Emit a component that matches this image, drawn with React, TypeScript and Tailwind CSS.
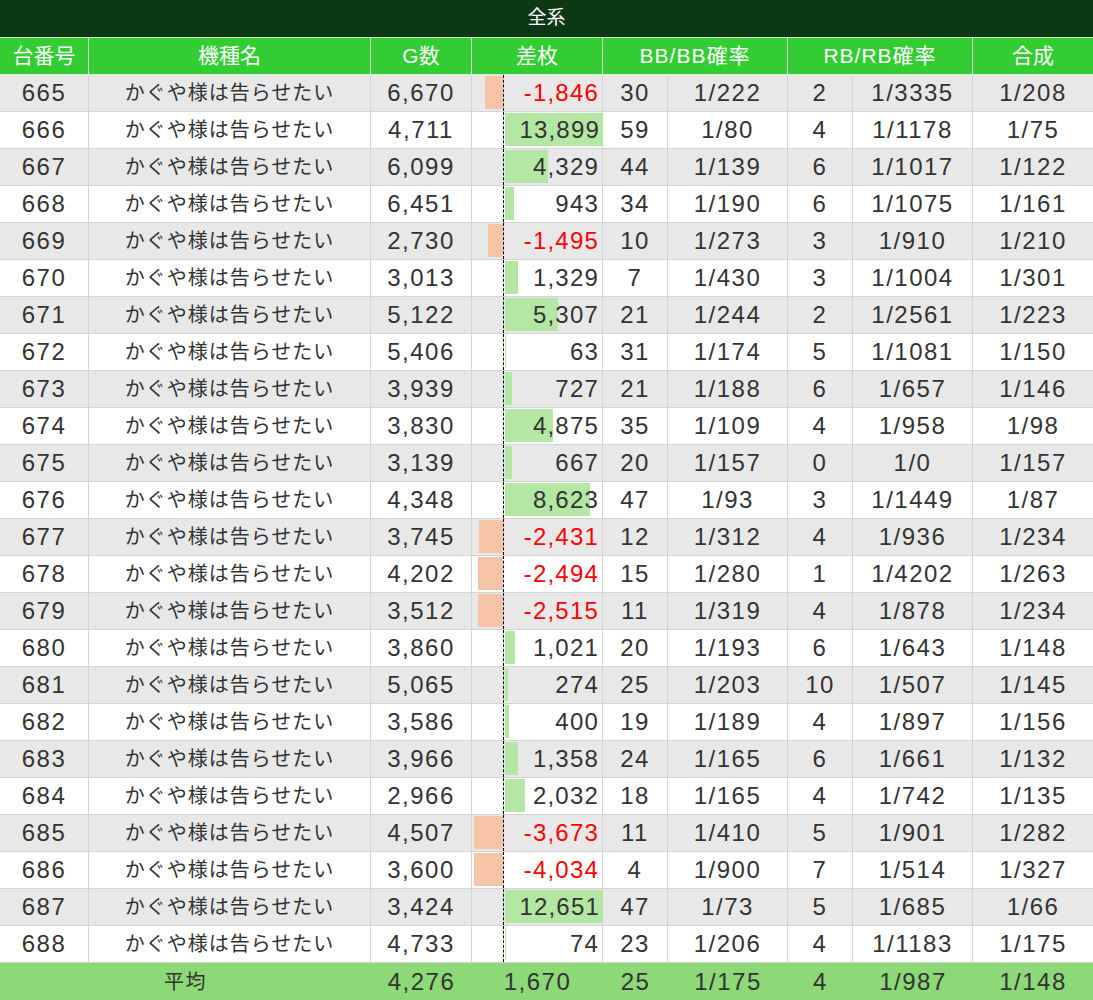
type Row = [number, number, number, number, string, number, string, string];

const rows: Row[] = [
  [665, 6670, -1846, 30, "1/222", 2, "1/3335", "1/208"],
  [666, 4711, 13899, 59, "1/80", 4, "1/1178", "1/75"],
  [667, 6099, 4329, 44, "1/139", 6, "1/1017", "1/122"],
  [668, 6451, 943, 34, "1/190", 6, "1/1075", "1/161"],
  [669, 2730, -1495, 10, "1/273", 3, "1/910", "1/210"],
  [670, 3013, 1329, 7, "1/430", 3, "1/1004", "1/301"],
  [671, 5122, 5307, 21, "1/244", 2, "1/2561", "1/223"],
  [672, 5406, 63, 31, "1/174", 5, "1/1081", "1/150"],
  [673, 3939, 727, 21, "1/188", 6, "1/657", "1/146"],
  [674, 3830, 4875, 35, "1/109", 4, "1/958", "1/98"],
  [675, 3139, 667, 20, "1/157", 0, "1/0", "1/157"],
  [676, 4348, 8623, 47, "1/93", 3, "1/1449", "1/87"],
  [677, 3745, -2431, 12, "1/312", 4, "1/936", "1/234"],
  [678, 4202, -2494, 15, "1/280", 1, "1/4202", "1/263"],
  [679, 3512, -2515, 11, "1/319", 4, "1/878", "1/234"],
  [680, 3860, 1021, 20, "1/193", 6, "1/643", "1/148"],
  [681, 5065, 274, 25, "1/203", 10, "1/507", "1/145"],
  [682, 3586, 400, 19, "1/189", 4, "1/897", "1/156"],
  [683, 3966, 1358, 24, "1/165", 6, "1/661", "1/132"],
  [684, 2966, 2032, 18, "1/165", 4, "1/742", "1/135"],
  [685, 4507, -3673, 11, "1/410", 5, "1/901", "1/282"],
  [686, 3600, -4034, 4, "1/900", 7, "1/514", "1/327"],
  [687, 3424, 12651, 47, "1/73", 5, "1/685", "1/66"],
  [688, 4733, 74, 23, "1/206", 4, "1/1183", "1/175"],
];

const cols =
  "grid grid-cols-[89px_282px_101px_131px_65px_120px_65px_120px_120px] h-[37px]";
const cell =
  "flex items-center justify-center border-r border-b border-[#d4d4d4] text-[24px] tracking-[1.5px]";

const fmt = (n: number) => n.toLocaleString("en-US");

function DiffCell({ v }: { v: number }) {
  const neg = v < 0;
  const w = Math.max(1, Math.min(Math.abs(v) * 0.0099, neg ? 29 : 98));
  return (
    <div className="grid border-r border-b border-[#d4d4d4]">
      <div className="col-start-1 row-start-1 flex h-full">
        <div className="w-[31px] flex justify-end pt-[1px]">
          {neg && <div className="h-[33px] bg-[#f6c4a6]" style={{ width: w }} />}
        </div>
        <div className="w-0 border-l border-dashed border-black" />
        <div className="flex-1 pl-[1px] pt-[1px]">
          {!neg && <div className="h-[33px] bg-[#b4e6a4]" style={{ width: w }} />}
        </div>
      </div>
      <div
        className={`col-start-1 row-start-1 flex items-center justify-end pr-[3px] text-[24px] tracking-[1.2px] ${
          neg ? "text-[#ff0000]" : ""
        }`}
      >
        {fmt(v)}
      </div>
    </div>
  );
}

export default function App() {
  return (
    <div className="w-[1093px] bg-white text-[#333333] font-['Liberation_Sans','Noto_Sans_CJK_JP',sans-serif]">
      <div className="h-[38px] flex items-center justify-center bg-[#0d3814] text-white text-[19px] border-b border-[#cfe6cc]">
        全系
      </div>
      <div className={`${cols} bg-[#33cc33] text-white text-[21px]`}>
        {["台番号", "機種名", "G数", "差枚"].map((h) => (
          <div key={h} className="flex items-center justify-center border-r border-b border-[#d6efd2]">
            {h}
          </div>
        ))}
        <div className="col-span-2 flex items-center justify-center border-r border-b border-[#d6efd2] tracking-[1px]">
          BB/BB確率
        </div>
        <div className="col-span-2 flex items-center justify-center border-r border-b border-[#d6efd2] tracking-[1px]">
          RB/RB確率
        </div>
        <div className="flex items-center justify-center border-b border-[#d6efd2]">合成</div>
      </div>
      {rows.map((r, i) => (
        <div key={r[0]} className={`${cols} ${i % 2 === 0 ? "bg-[#e8e8e8]" : "bg-white"}`}>
          <div className={cell}>{r[0]}</div>
          <div className="flex items-center justify-center border-r border-b border-[#d4d4d4] text-[20px] tracking-[1px]">
            かぐや様は告らせたい
          </div>
          <div className={cell}>{fmt(r[1])}</div>
          <DiffCell v={r[2]} />
          <div className={cell}>{r[3]}</div>
          <div className={cell}>{r[4]}</div>
          <div className={cell}>{r[5]}</div>
          <div className={cell}>{r[6]}</div>
          <div className={`${cell} border-r-0`}>{r[7]}</div>
        </div>
      ))}
      <div className={`${cols} bg-[#8dd877] text-[24px] tracking-[1.5px]`}>
        <div className="col-span-2 flex items-center justify-center text-[20px]">平均</div>
        <div className="flex items-center justify-center">4,276</div>
        <div className="flex items-center justify-center">1,670</div>
        <div className="flex items-center justify-center">25</div>
        <div className="flex items-center justify-center">1/175</div>
        <div className="flex items-center justify-center">4</div>
        <div className="flex items-center justify-center">1/987</div>
        <div className="flex items-center justify-center">1/148</div>
      </div>
    </div>
  );
}
